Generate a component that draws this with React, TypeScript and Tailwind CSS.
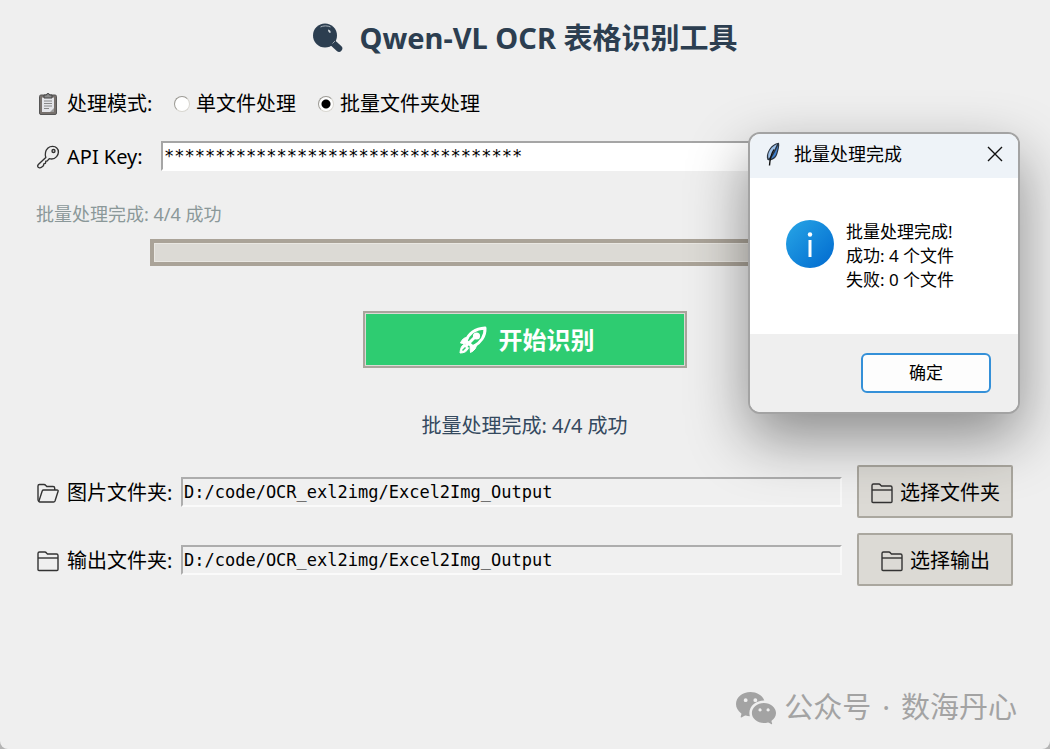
import { useState } from "react";
import type { ReactNode } from "react";
import { BsWechat } from "react-icons/bs";

function SearchIcon() {
  return (
    <svg className="h-8 w-8" viewBox="0 0 32 32" aria-hidden="true">
      <path d="M21 21l6 5.500" stroke="#2c3e50" strokeWidth="6.500" strokeLinecap="round" />
      <circle cx="13" cy="13.500" r="12" fill="#2c3e50" />
      <path d="M8.500 5C11 3.500 16 3.500 18.500 5" fill="none" stroke="#aab3bb" strokeWidth="1" />
      <path d="M16 7.500c2 .5 3 1.500 2.500 3.500-1.500 0-2.500-1.500-2.500-3.500z" fill="#d5dade" />
      <path d="M20.500 21.500l2.500-2.500" stroke="#9aa4ad" strokeWidth="1" />
    </svg>
  );
}

function ClipboardIcon() {
  return (
    <svg className="h-6 w-6" viewBox="0 0 24 24" fill="none" aria-hidden="true">
      <rect x="3.500" y="3" width="17" height="19.500" rx="1.500" fill="#77716d" stroke="#555" />
      <path d="M6 5.500h12v14.500h-12z" fill="#e4e5e9" />
      <path d="M8 3h2.500a1.500 1.500 0 0 1 3 0H16v3H8z" fill="#8b8b8b" stroke="#444" />
      <path d="M8 9h8M8 11.500h8M8 14h8M8 16.500h5" stroke="#888" />
      <path d="M14 20l4-4v4z" fill="#9b9b9b" />
    </svg>
  );
}

function KeyIcon() {
  return (
    <svg className="h-6 w-6" viewBox="0 0 24 24" fill="none" stroke="#333" strokeWidth="1.400" aria-hidden="true">
      <path
        d="M9.800 12.500C8.800 9.500 9.500 5.300 12 3c2.400-2 6.600-2.200 8.800 0 2.300 2.200 2 6.200-.2 8.600-1.900 2.100-4.800 2.900-7.300 2l-2 2.300-1.500.4-.4 2-1.600.5-.4 2-1.900 1.500c-1 .8-3 .7-3.600-.3-.5-.8-.2-1.800.4-2.500z"
        strokeLinejoin="round"
      />
      <circle cx="17.500" cy="6" r="1.500" />
    </svg>
  );
}

function FolderIcon() {
  return (
    <svg className="h-6 w-6" viewBox="0 0 24 24" fill="none" stroke="#333" strokeWidth="1.400" aria-hidden="true">
      <path d="M2 20.500V4.500C2 3.600 2.500 3 3.500 3h5.300c.8 0 1.200.3 1.700 1L11.500 5H20.500c1 0 1.500.5 1.500 1.500V20.500c0 .8-.4 1-1 1H3c-.6 0-1-.2-1-1z" />
      <path d="M2 9h20" />
    </svg>
  );
}

function OpenFolderIcon() {
  return (
    <svg className="h-6 w-6" viewBox="0 0 24 24" fill="none" stroke="#333" strokeWidth="1.400" aria-hidden="true">
      <path d="M3 20.500C2.300 20 2 19.500 2 18.500V5c0-1 .5-1.500 1.500-1.500H8c.7 0 1.200.2 1.600.7l1.200 1.300H17c1.200 0 1.700.6 1.700 1.600v1.800" />
      <path d="M7.500 9H21c1 0 1.400.5 1.100 1.300L19 20c-.3.700-.7 1-1.400 1H3.800c-.8 0-1-.4-.8-1.100L6.200 10C6.500 9.300 6.800 9 7.500 9z" />
    </svg>
  );
}

function RocketIcon() {
  return (
    <svg className="h-7 w-7" viewBox="0 0 28 28" fill="none" stroke="#fff" aria-hidden="true">
      <path d="M7 15C9.500 8 16 2.500 26 2c.5 8-4.500 15-12 19z" strokeWidth="3" strokeLinejoin="round" />
      <circle cx="17.500" cy="10" r="3.600" fill="#fff" stroke="none" />
      <path d="M7 20l9-9" strokeWidth="3" strokeLinecap="round" />
      <path d="M8 11.500c-3 0-5 2-6.500 5.500l6 1zM17.500 18c0 4-2 6.500-6 8.500l-.5-6z" fill="#fff" strokeLinejoin="round" />
      <path d="M5.500 18c-3 1.500-4 4-4.500 9 4.500 0 7-1.500 8.500-5z" fill="#fff" strokeLinejoin="round" />
      <path d="M3.500 24.500l3-3" stroke="#2ecc71" strokeWidth="1.500" />
    </svg>
  );
}

function FeatherIcon() {
  return (
    <svg className="h-6 w-4" viewBox="0 0 16 24" aria-hidden="true">
      <path d="M14 .8c-4 .4-8.500 3.500-10.500 8-1.500 3-2.300 6-1 9.200l2.500.5c4.500-1 6.500-3.500 7.500-7C13.500 8 14.800 4 14 .8z" fill="#2a3440" />
      <path d="M12 2C8 4 4.800 7 3.600 11c-.6 2-.5 4 0 5.800C7 13 9.500 8 12 2z" fill="#9dc0e8" />
      <path d="M12.800 3.500C11 8.500 8.500 13 5.500 17c3.300-1 5.200-3.200 6-6.300.6-2.300 1.800-4.900 1.300-7.200z" fill="#3f7fcd" />
      <path d="M9 7.500C6.500 11.500 5 16 4.500 23.500" fill="none" stroke="#111" strokeWidth="1.400" />
    </svg>
  );
}

function InfoIcon() {
  return (
    <svg className="h-12 w-12 shrink-0" viewBox="0 0 48 48" aria-hidden="true">
      <defs>
        <linearGradient id="info-fill" x1="0" y1="0" x2="1" y2="1">
          <stop offset="0" stopColor="#28a6e6" />
          <stop offset="1" stopColor="#0069cf" />
        </linearGradient>
      </defs>
      <circle cx="24" cy="24" r="24" fill="url(#info-fill)" />
      <circle cx="24" cy="14.500" r="2.200" fill="#fff" />
      <path d="M24 20v17" stroke="#fff" strokeWidth="3" />
    </svg>
  );
}

type ModeOptionProps = {
  label: string;
  checked: boolean;
  onSelect: () => void;
};

function ModeOption({ label, checked, onSelect }: ModeOptionProps) {
  return (
    <label className="flex items-center gap-1.5">
      <input
        type="radio"
        name="mode"
        checked={checked}
        onChange={onSelect}
        className="h-4 w-4 appearance-none rounded-full border border-[#9c9a94] border-r-[#d8d6d0] border-b-[#d8d6d0] bg-white checked:bg-[radial-gradient(circle,#000_0_4px,#fff_5px)]"
      />
      {label}
    </label>
  );
}

type FolderRowProps = {
  id: string;
  icon: ReactNode;
  label: string;
  action: string;
};

function FolderRow({ id, icon, label, action }: FolderRowProps) {
  return (
    <div className="flex items-center">
      <label htmlFor={id} className="flex w-[145px] shrink-0 items-center gap-[7px] pt-0.5 whitespace-nowrap">
        {icon}
        {label}
      </label>
      <input
        id={id}
        readOnly
        defaultValue="D:/code/OCR_exl2img/Excel2Img_Output"
        className="h-[30px] min-w-0 flex-1 border-2 border-t-[#adadad] border-r-[#f8f8f8] border-b-[#fafafa] border-l-[#adadad] bg-[#f0f0f0] px-px font-['DejaVu_Sans_Mono',monospace] text-[17px]"
      />
      <button
        type="button"
        className="ml-[15px] flex h-[53px] w-[156px] items-center justify-center gap-1.5 rounded-xs border-2 border-[#aaa79f] bg-[#dcdad5] pt-0.5"
      >
        <FolderIcon />
        {action}
      </button>
    </div>
  );
}

function ResultDialog({ onClose }: { onClose: () => void }) {
  return (
    <section
      role="dialog"
      aria-labelledby="dialog-title"
      className="absolute top-[132px] right-[30px] w-[272px] overflow-hidden rounded-xl border-2 border-[#a3a3a3] bg-white text-[17px] leading-6 text-black shadow-[0_24px_60px_rgba(0,0,0,0.42)]"
    >
      <header className="flex h-11 items-center bg-[#eef3f8] px-[15px] pb-1">
        <FeatherIcon />
        <h2 id="dialog-title" className="ml-[13px] flex-1 text-lg leading-6">
          批量处理完成
        </h2>
        <button type="button" aria-label="关闭" onClick={onClose}>
          <svg className="h-4 w-4" viewBox="0 0 16 16" stroke="#111" strokeWidth="1.400" aria-hidden="true">
            <path d="M1 1l14 14M15 1L1 15" />
          </svg>
        </button>
      </header>
      <div className="flex gap-3 px-9 pt-[42px] pb-[42px]">
        <InfoIcon />
        <p>
          批量处理完成!
          <br />
          成功: 4 个文件
          <br />
          失败: 0 个文件
        </p>
      </div>
      <footer className="flex justify-end bg-[#efefef] px-[27px] py-[19px]">
        <button
          type="button"
          onClick={onClose}
          className="h-10 w-[130px] rounded-md border-2 border-[#3490d8] bg-[#fdfdfd]"
        >
          确定
        </button>
      </footer>
    </section>
  );
}

export default function App() {
  const [mode, setMode] = useState("batch");
  const [dialogOpen, setDialogOpen] = useState(true);

  return (
    <div className="bg-[#b4b4b4]">
      <main className="relative flex min-h-screen flex-col rounded-b-lg bg-[#efefef] pt-[18px] pr-[37px] pl-9 font-['Noto_Sans','Noto_Sans_CJK_SC',sans-serif] text-xl leading-7 text-black">
        <h1 className="flex items-center justify-center gap-4 text-[29px] leading-10 font-bold text-[#2c3e50]">
          <SearchIcon />
          Qwen-VL OCR 表格识别工具
        </h1>

        <div role="radiogroup" aria-labelledby="mode-label" className="mt-8 flex items-center">
          <span id="mode-label" className="flex w-[138px] items-center gap-[7px]">
            <ClipboardIcon />
            处理模式:
          </span>
          <div className="flex gap-[22px]">
            <ModeOption label="单文件处理" checked={mode === "single"} onSelect={() => setMode("single")} />
            <ModeOption label="批量文件夹处理" checked={mode === "batch"} onSelect={() => setMode("batch")} />
          </div>
        </div>

        <div className="mt-[23px] flex items-center">
          <label htmlFor="api-key" className="flex w-[125px] shrink-0 items-center gap-[7px] pt-0.5">
            <KeyIcon />
            API Key:
          </label>
          <input
            id="api-key"
            defaultValue="***********************************"
            className="h-[30px] min-w-0 flex-1 border-2 border-t-[#a5a5a5] border-r-white border-b-white border-l-[#a5a5a5] bg-white px-px font-['DejaVu_Sans_Mono',monospace] text-[17px]"
          />
        </div>

        <p className="mt-[29px] text-lg leading-7 text-[#8b9899]">批量处理完成: 4/4 成功</p>
        <div
          role="progressbar"
          aria-label="处理进度"
          className="mt-[11px] mr-[113px] ml-[114px] h-[27px] border-4 border-[#aaa398] bg-[#dcdad5] inset-ring inset-ring-[#e9e7e2]"
        />

        <button
          type="button"
          className="mt-[45px] flex h-[57px] w-[324px] items-center justify-center gap-3 self-center border-2 border-[#a9a59c] bg-[#2ecc71] pl-1 text-2xl font-bold text-white inset-ring inset-ring-[#dcdad5]"
        >
          <RocketIcon />
          开始识别
        </button>
        <p className="mt-11 text-center text-[#34495e]">批量处理完成: 4/4 成功</p>

        <div className="mt-[25px] flex flex-col gap-[15px]">
          <FolderRow id="image-folder" icon={<OpenFolderIcon />} label="图片文件夹:" action="选择文件夹" />
          <FolderRow id="output-folder" icon={<FolderIcon />} label="输出文件夹:" action="选择输出" />
        </div>

        <footer className="-mr-1 mt-auto flex items-center justify-end gap-2 pb-[22px] text-[29px] leading-10 text-[#a3a3a3]">
          <BsWechat className="h-10 w-10" aria-hidden="true" />
          <span className="flex gap-[11px]">
            <span>公众号</span>
            <span>·</span>
            <span>数海丹心</span>
          </span>
        </footer>

        {dialogOpen && <ResultDialog onClose={() => setDialogOpen(false)} />}
      </main>
    </div>
  );
}
